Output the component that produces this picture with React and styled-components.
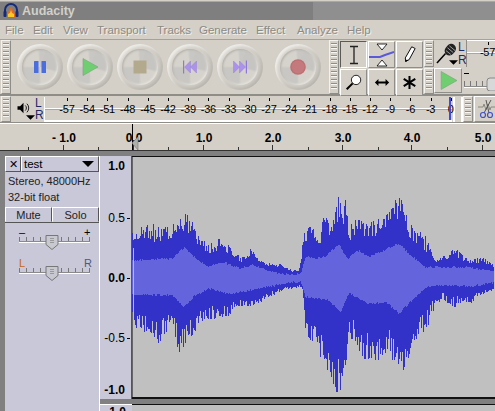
// Audacity main window
import React from 'react';
import styled, { createGlobalStyle } from 'styled-components';

const Global = createGlobalStyle`
  html, body { margin: 0; padding: 0; background: #d4d0c8; }
  * { box-sizing: border-box; }
`;

const FACE = '#d4d0c8';
const PANEL = '#c8c8d8';
const SANS = '"Liberation Sans", Arial, sans-serif';

const Window = styled.div`
  width: 495px;
  height: 411px;
  overflow: hidden;
  display: flex;
  flex-direction: column;
  background: ${FACE};
  font-family: ${SANS};
  font-size: 11px;
  color: #000;
`;

const TitleBar = styled.div`
  height: 19px;
  margin-top: 1px;
  flex-shrink: 0;
  display: flex;
  align-items: center;
  gap: 3px;
  padding-left: 3px;
  background: linear-gradient(90deg, #7f7f7f 0 313px, #8f8f8f 313px);
  border-top: 1px solid #a8a8a8;
`;

const AppName = styled.span`
  font-size: 12.5px;
  font-weight: bold;
  color: ${FACE};
`;

const MenuBar = styled.div`
  height: 20px;
  flex-shrink: 0;
  display: flex;
  align-items: center;
  padding-left: 5px;
  border-bottom: 1px solid #a5a29b;
`;

const MenuItem = styled.span`
  width: ${p => p.$w}px;
  font-size: 11.5px;
  color: #8c8a84;
  text-shadow: 1px 1px 0 #f2f0ea;
`;

const ToolRow = styled.div`
  height: 56px;
  flex-shrink: 0;
  display: flex;
  border-bottom: 2px solid #8f8d87;
`;

const Grip = styled.div`
  width: 10px;
  flex-shrink: 0;
  margin-left: ${p => p.$ml || 0}px;
  border: 1px solid #f4f2ec;
  border-right-color: #8f8d87;
  border-bottom-color: #8f8d87;
  background:
    repeating-linear-gradient(180deg, #8f8d87 0 1px, #f8f6f0 1px 2px, ${FACE} 2px 4px)
    center 2px / 6px calc(100% - 4px) no-repeat;
`;

const Transport = styled.div`
  display: flex;
  align-items: center;
  padding-left: 6px;
  width: 318px;
  gap: 4px;
`;

const RoundButton = styled.div`
  width: 46px;
  height: 46px;
  flex-shrink: 0;
  margin-left: ${p => p.$ml || 0}px;
  position: relative;
  border-radius: 50%;
  display: flex;
  align-items: center;
  justify-content: center;
  background: ${FACE};
  box-shadow:
    inset 2px 2px 3px #efeeea,
    inset -2px -2px 4px #b4b2ac;

  &::before {
    content: '';
    position: absolute;
    inset: 5px;
    border-radius: 50%;
    background: conic-gradient(
      #c8c7c3 0 20deg, #c6c5c1 20deg 100deg, #d6d3cc 110deg 175deg,
      #c8c7c3 185deg 265deg, #d6d3cc 275deg 350deg, #c8c7c3 360deg
    );
    box-shadow: inset 1px 1px 2px #b4b2ac, inset -1px -1px 2px #e6e5e0;
  }

  svg { position: relative; }
`;

const ToolGrid = styled.div`
  display: grid;
  grid-template-columns: repeat(3, 27px);
  grid-template-rows: 27px 27px;
  gap: 1px;
  padding: 1px;
`;

const ToolButton = styled.div`
  display: flex;
  align-items: center;
  justify-content: center;
  border: 1px solid;
  border-color: ${p => p.$down ? '#5c5a56 #fff #fff #5c5a56' : '#fff #8f8d87 #8f8d87 #fff'};
  background: ${FACE};
`;

const PlayThru = styled(ToolButton)`
  width: 28px;
  margin-bottom: 1px;
`;

const RightStack = styled.div`
  flex: 1;
  display: flex;
  flex-direction: column;
  gap: 1px;
`;

const RightRow = styled.div`
  flex: 1;
  display: flex;
`;

const MicBox = styled.div`
  width: 33px;
  flex-shrink: 0;
  display: flex;
  align-items: stretch;
  padding: 1px 0 1px 2px;
  border-right: 1px solid #8f8d87;
`;

const MicIcon = styled.div`
  position: relative;
  width: 22px;
  flex-shrink: 0;
  padding-top: 1px;
`;

const MicArrow = styled.div`
  position: absolute;
  right: 0;
  bottom: 1px;
  line-height: 0;
`;

const Channels = styled.div`
  display: flex;
  flex-direction: column;
  justify-content: space-between;
  font-size: 12px;
  line-height: 12px;
  color: #1c2a66;
`;

const MiniMeter = styled.div`
  flex: 1;
  position: relative;
  overflow: hidden;
  border-top: 1px solid #fff;
`;

const MiniLine = styled.div`
  position: absolute;
  left: 0;
  right: 0;
  top: 11px;
  height: 2px;
  background: linear-gradient(#fff 50%, #a9a7a1 50%);
`;

const MiniText = styled.span`
  position: absolute;
  right: 0;
  top: 5px;
  font-size: 11px;
  letter-spacing: -0.3px;
  color: #000;
`;

const MiniSlider = styled.div`
  flex: 1;
  min-width: 0;
  overflow: hidden;
  display: flex;
  align-items: center;
  padding-left: 1px;
`;

const MeterRow = styled.div`
  height: 27px;
  flex-shrink: 0;
  display: flex;
  border-bottom: 1px solid #8f8d87;
`;

const SpeakerBox = styled.div`
  width: 33px;
  flex-shrink: 0;
  display: flex;
  align-items: stretch;
  padding: 1px 0 1px 6px;
`;

const SpeakerIcon = styled.div`
  position: relative;
  width: 18px;
  flex-shrink: 0;
  padding-top: 5px;
`;

const SpeakerArrow = styled.div`
  position: absolute;
  right: 0;
  bottom: 1px;
  line-height: 0;
`;

const MeterScale = styled.div`
  width: 408px;
  flex-shrink: 0;
  position: relative;
  margin-top: 1px;
  border-left: 1px solid #fff;
  border-bottom: 2px solid #fff;
`;

const MeterLine = styled.div`
  position: absolute;
  left: 0;
  right: 0;
  top: 11px;
  height: 2px;
  background: linear-gradient(#fff 50%, #a9a7a1 50%);
`;

const MeterTick = styled.i`
  position: absolute;
  top: 1px;
  width: 1px;
  height: 3px;
  background: #000;
`;

const MeterLabel = styled.span`
  position: absolute;
  top: 6px;
  transform: translateX(-50%);
  font-size: 11px;
  line-height: 13px;
  letter-spacing: -0.2px;
`;

const MeterPeak = styled.div`
  position: absolute;
  top: 0;
  bottom: 0;
  left: 404px;
  width: 2px;
  background: #3f48e0;
`;

const MeterEnd = styled.div`
  width: 10px;
  flex-shrink: 0;
  margin: 1px 0 0 1px;
  border-left: 2px solid #fff;
  border-right: 2px solid #fff;
`;

const CutButton = styled.div`
  flex: 1;
  margin-left: 1px;
  display: flex;
  align-items: center;
  padding-left: 3px;
  border: 1px solid;
  border-color: #fff transparent #8f8d87 #fff;
`;

const Ruler = styled.div`
  height: 27px;
  flex-shrink: 0;
  position: relative;
  overflow: hidden;
  border-top: 1px solid #fff;
`;

const RulerLabel = styled.span`
  position: absolute;
  top: 7px;
  transform: translateX(-50%);
  font-size: 12px;
  font-weight: bold;
  white-space: pre;
`;

const RulerTick = styled.i`
  position: absolute;
  bottom: 0;
  width: 1px;
  height: ${p => p.$major ? 5 : 3}px;
  background: #333;
`;

const Playhead = styled.i`
  position: absolute;
  left: 132px;
  top: 0;
  bottom: 0;
  width: 1px;
  background: #000;
`;

const PlayMark = styled.svg`
  position: absolute;
  left: 132px;
  bottom: 0;
`;

const TrackArea = styled.div`
  flex: 1;
  min-height: 0;
  display: flex;
  background: #808080;
  border-top: 1px solid #333;
  padding: 5px 0 0 5px;
`;

const TrackPanel = styled.div`
  width: 95px;
  flex-shrink: 0;
  background: ${PANEL};
  display: flex;
  flex-direction: column;
  border-right: 1px solid #fff;
`;

const TitleRow = styled.div`
  display: flex;
  height: 16px;
`;

const CloseBox = styled.div`
  width: 16px;
  display: flex;
  align-items: center;
  justify-content: center;
  border: 1px solid;
  border-color: #fff #555 #555 #fff;
  font-size: 11px;
`;

const TrackName = styled.div`
  flex: 1;
  display: flex;
  align-items: center;
  justify-content: space-between;
  padding: 0 4px 0 2px;
  font-size: 11.5px;
  border: 1px solid;
  border-color: #fff #555 #555 #fff;
`;

const Arrow = styled.i`
  width: 0;
  height: 0;
  border-left: 6px solid transparent;
  border-right: 6px solid transparent;
  border-top: 6px solid #000;
`;

const Info = styled.div`
  height: 35px;
  padding: 1px 3px;
  font-size: 11px;
  line-height: 16px;
  color: #222;
  white-space: nowrap;
`;

const MuteRow = styled.div`
  display: flex;
  height: 16px;
  border-bottom: 1px solid #555;
`;

const PanelButton = styled.div`
  flex: 1;
  display: flex;
  align-items: center;
  justify-content: center;
  font-size: 11px;
  color: #222;
  border: 1px solid;
  border-color: #fff #555 transparent #fff;
`;

const SliderBlock = styled.div`
  padding: 3px 0 0 13px;
  display: flex;
  flex-direction: column;
  gap: 5px;
`;

const Scale = styled.div`
  height: 243px;
  flex-shrink: 0;
  position: relative;
  background: ${PANEL};
  border-right: 1px solid #555;
`;

const ScaleLabel = styled.span`
  position: absolute;
  right: 6px;
  transform: translateY(-50%);
  font-size: 12px;
  font-weight: ${p => p.$bold ? 'bold' : 'normal'};
  line-height: 14px;
  white-space: nowrap;
`;

const ScaleDash = styled.i`
  position: absolute;
  right: 1px;
  width: 3px;
  height: 1px;
  background: #000;
`;

const CanvasColumn = styled.div`
  flex: 1;
  min-width: 0;
  display: flex;
  flex-direction: column;
`;

const ScaleColumn = styled.div`
  width: 32px;
  flex-shrink: 0;
  display: flex;
  flex-direction: column;
`;

const Canvas = styled.div`
  height: 243px;
  flex-shrink: 0;
  background: #c0c0c0;
  border-top: 1px solid #111;
  border-bottom: 2px solid #111;
`;

const Gutter = styled.div`
  height: 5px;
  flex-shrink: 0;
`;

const NextCanvas = styled.div`
  flex: 1;
  background: #c0c0c0;
  border-top: 1px solid #111;
`;

const NextScale = styled.div`
  flex: 1;
  background: ${PANEL};
  border-top: 1px solid #fff;
  overflow: hidden;
  display: flex;
  justify-content: flex-end;
  padding-right: 6px;
  font-size: 12px;
  font-weight: bold;
  line-height: 14px;
`;

// waveform envelopes, read off the picture
const a = pts => pts.map(([x, y]) => [130 + x / 3, 150 + y / 3]);
const b = pts => pts.map(([x, y]) => [310 + x / 3, 150 + y / 3]);

const OUTER_TOP = [
  ...a([[8,255],[25,215],[60,215],[100,235],[140,215],[175,188],[195,220],[215,262],[245,280],[280,258],[310,300],[340,322],[370,290],[390,330],[410,340],[440,335],[470,352],[510,362],[525,250],[555,212]]),
  ...b([[0,250],[30,262],[45,195],[70,225],[90,130],[110,150],[122,245],[130,208],[180,215],[230,200],[245,175],[272,128],[290,190],[320,240],[340,245],[360,270],[380,325],[420,310],[435,292],[480,330],[520,320],[555,345]]),
];
const OUTER_BOT = [
  ...a([[8,525],[50,550],[95,583],[130,510],[148,610],[175,575],[200,545],[220,515],[260,505],[300,498],[320,468],[370,472],[410,448],[470,418],[520,412],[530,540],[558,612],[570,590]]),
  ...b([[0,585],[30,612],[60,672],[90,745],[108,715],[120,555],[160,625],[210,632],[240,600],[270,685],[300,628],[320,572],[360,530],[375,480],[400,445],[430,472],[490,458],[520,432],[555,425]]),
];
const INNER_TOP = [
  ...a([[8,332],[130,325],[165,293],[200,325],[240,350],[280,335],[330,355],[370,345],[430,365],[475,373],[515,372],[530,320],[570,325]]),
  ...b([[0,328],[50,320],[90,283],[115,328],[145,300],[180,320],[215,305],[270,280],[310,320],[350,352],[420,352],[480,352],[555,365]]),
];
const INNER_BOT = [
  ...a([[8,435],[130,435],[165,472],[200,435],[240,415],[300,432],[370,420],[470,400],[515,395],[530,442],[570,445]]),
  ...b([[0,437],[60,452],[95,486],[120,430],[180,462],[230,455],[270,490],[320,440],[355,410],[420,405],[480,410],[555,398]]),
];

const lerp = (pts, x) => {
  for (let i = 1; i < pts.length; i++) {
    if (x <= pts[i][0]) {
      const [x0, y0] = pts[i - 1];
      const [x1, y1] = pts[i];
      return y0 + ((y1 - y0) * (x - x0)) / (x1 - x0 || 1);
    }
  }
  return pts[pts.length - 1][1];
};

let seed = 7;
const rnd = () => {
  seed = (seed * 16807) % 2147483647;
  return seed / 2147483647;
};

const buildWave = () => {
  let dark = '';
  let light = '';
  for (let x = 133; x < 495; x++) {
    const px = x + 0.5;
    const oT = lerp(OUTER_TOP, px);
    const oB = lerp(OUTER_BOT, px);
    const iT = lerp(INNER_TOP, px);
    const iB = lerp(INNER_BOT, px);
    const top = oT + Math.pow(rnd(), 1.5) * (iT - oT) * 0.5;
    const bot = oB - Math.pow(rnd(), 1.5) * (oB - iB) * 0.5;
    dark += `M${x - 132.5} ${Math.round(top) - 157}V${Math.round(bot) - 157}`;
    const t2 = iT + (rnd() - 0.5) * 2;
    const b2 = iB + (rnd() - 0.5) * 2;
    light += `M${x - 132.5} ${Math.round(t2) - 157}V${Math.round(b2) - 157}`;
  }
  return { dark, light };
};

const wave = buildWave();

const Waveform = () => (
  <svg width="362" height="240" viewBox="0 0 362 240" style={{ display: 'block' }} shapeRendering="crispEdges">
    <path d="M0 0V240" stroke="#666" strokeWidth="1" transform="translate(0.5 0)" />
    <path d={wave.dark} stroke="#3232c8" strokeWidth="1" fill="none" />
    <path d={wave.light} stroke="#6464dc" strokeWidth="1" fill="none" />
    <path d="M1.5 91V168" stroke="#d8d020" strokeWidth="1" />
  </svg>
);

const AppIcon = () => (
  <svg width="16" height="16" viewBox="0 0 16 16">
    <path d="M2 10V7a6 6 0 0 1 12 0v3" fill="none" stroke="#152a78" strokeWidth="2" />
    <rect x="0.5" y="8" width="3" height="6" rx="1" fill="#152a78" />
    <rect x="12.5" y="8" width="3" height="6" rx="1" fill="#152a78" />
    <path d="M4 14V10l1.5-1L7 5.5 8 4l1 1.5L10.500 9 12 10v4z" fill="#e8681c" />
    <path d="M5 14v-3l2-1 1-3 1 3 2 1v3z" fill="#f6c828" />
  </svg>
);

const Pause = () => (
  <svg width="14" height="14" viewBox="0 0 14 14">
    <rect x="1" y="1" width="4.500" height="12" rx="0.500" fill="#4a6ee0" />
    <rect x="8.500" y="1" width="4.500" height="12" rx="0.500" fill="#4a6ee0" />
  </svg>
);

const Play = ({ size = 18 }) => (
  <svg width={size} height={size} viewBox="0 0 18 18">
    <path d="M2 0.500L17 9 2 17.500z" fill="#6fcf70" stroke="#7f9f7f" strokeWidth="0.600" />
  </svg>
);

const Stop = () => (
  <svg width="14" height="14" viewBox="0 0 14 14">
    <rect x="0.500" y="0.500" width="13" height="13" fill="#b3a98c" />
  </svg>
);

const Rewind = () => (
  <svg width="14" height="14" viewBox="0 0 14 14">
    <rect x="0" y="0.500" width="1.200" height="13" fill="#8f78d8" />
    <path d="M7.500 1L1.500 7l6 6zM13.500 1l-6 6 6 6z" fill="#ab92ea" stroke="#8f78d8" strokeWidth="0.400" />
  </svg>
);

const Forward = () => (
  <svg width="14" height="14" viewBox="0 0 14 14">
    <rect x="12.800" y="0.500" width="1.200" height="13" fill="#8f78d8" />
    <path d="M6.500 1l6 6-6 6zM0.500 1l6 6-6 6z" fill="#ab92ea" stroke="#8f78d8" strokeWidth="0.400" />
  </svg>
);

const Record = () => (
  <svg width="16" height="16" viewBox="0 0 16 16">
    <circle cx="8" cy="8" r="7.800" fill="#bd6f72" />
    <circle cx="8" cy="8" r="6.500" fill="#c47a7c" />
  </svg>
);

const IBeam = () => (
  <svg width="14" height="20" viewBox="0 0 14 20">
    <path d="M3 1.500h8M3 18.500h8M7 1.500v17" stroke="#222" strokeWidth="1.300" fill="none" />
  </svg>
);

const Envelope = () => (
  <svg width="25" height="24" viewBox="0 0 25 24">
    <path d="M8 1h10l-5 6z" fill="#fff" stroke="#000" strokeWidth="0.800" />
    <path d="M8 23h10l-5-6z" fill="#fff" stroke="#000" strokeWidth="0.800" />
    <path d="M0 14h11l5-2 9-3" fill="none" stroke="#5a5ad8" strokeWidth="2" />
  </svg>
);

const Pencil = () => (
  <svg width="12" height="19" viewBox="0 0 14 20">
    <path d="M9 1l4 2-7 13-4 2-0.500-4z" fill="#fff" stroke="#000" strokeWidth="1.100" />
    <path d="M1.500 18l2.500-1.500" stroke="#000" strokeWidth="1.500" />
  </svg>
);

const Magnifier = () => (
  <svg width="17" height="17" viewBox="0 0 20 20">
    <circle cx="13" cy="7" r="5.500" fill="#fff" stroke="#000" strokeWidth="1" />
    <path d="M9 11l-7 7" stroke="#000" strokeWidth="2.400" />
  </svg>
);

const TimeShift = () => (
  <svg width="16" height="9" viewBox="0 0 18 10">
    <path d="M1 5l4-4v3h8V1l4 4-4 4V6H5v3z" fill="#000" />
  </svg>
);

const Multi = () => (
  <svg width="13" height="13" viewBox="0 0 16 18">
    <path d="M8 0v18M0 4l16 10M16 4L0 14" stroke="#000" strokeWidth="2.800" />
  </svg>
);

const Mic = () => (
  <svg width="21" height="22" viewBox="0 0 22 23">
    <path d="M1 22l9-10" stroke="#000" strokeWidth="1.600" />
    <rect x="10" y="1.500" width="10" height="13" rx="5" fill="#222" transform="rotate(40 15 8)" />
    <path d="M12 6l6 5M14 4l6 5M10.500 9l5 4" stroke="#ddd" strokeWidth="0.700" />
  </svg>
);

const SmallArrow = () => (
  <svg width="9" height="5" viewBox="0 0 10 5">
    <path d="M0 0h10L5 5z" fill="#000" />
  </svg>
);

const Speaker = () => (
  <svg width="13" height="12" viewBox="0 0 14 14">
    <path d="M0 5h3l4-4v12l-4-4H0z" fill="#000" />
    <path d="M9 4a4 4 0 0 1 0 6M11 2a7 7 0 0 1 0 10" fill="none" stroke="#000" strokeWidth="1" />
  </svg>
);

const Scissors = () => (
  <svg width="20" height="20" viewBox="0 0 20 20">
    <path d="M0 8h5l1-3 2 6 2-6 2 6 1-3h7" fill="none" stroke="#8a8880" strokeWidth="1" />
    <path d="M13 1L6 14M8 1l3 13" stroke="#555" strokeWidth="1" />
    <circle cx="5" cy="16" r="2.500" fill="none" stroke="#3f52c8" strokeWidth="1.200" />
    <circle cx="12" cy="16" r="2.500" fill="none" stroke="#3f52c8" strokeWidth="1.200" />
  </svg>
);

const Slider = ({ left, right, thumb = 34 }) => (
  <svg width="74" height="26" viewBox="0 0 74 26" style={{ display: 'block' }}>
    <text x="1" y="10" fontSize="11" fontFamily={SANS} fill={left === 'L' ? '#c06a10' : '#000'}>{left}</text>
    <text x="66" y="10" fontSize="11" fontFamily={SANS} fill={right === 'R' ? '#4a5a80' : '#000'}>{right}</text>
    <path d="M1 15.500h71" stroke="#8a8a8a" strokeWidth="1" />
    <path d="M1 16.500h71" stroke="#fff" strokeWidth="1" />
    {[1, 8, 15, 22, 29, 43, 50, 57, 64, 71].map(x => (
      <path key={x} d={`M${x + 0.5} 11v4`} stroke="#777" strokeWidth="1" />
    ))}
    <path d={`M${thumb - 6} 9.500h12v9l-6 5-6-5z`} fill="#c8c8d0" stroke="#777" />
    <path d={`M${thumb - 2} 12.500h4M${thumb - 2} 14.500h4M${thumb - 2} 16.500h4`} stroke="#999" />
  </svg>
);

const InputSlider = () => (
  <svg width="32" height="20" viewBox="0 0 32 20" style={{ flexShrink: 0 }}>
    <path d="M1 2.500h5" stroke="#000" />
    <path d="M1 15.500h26" stroke="#8a8a8a" />
    <path d="M1 16.500h26" stroke="#fff" />
    {[1, 7, 13, 19].map(x => <path key={x} d={`M${x + 0.5} 10v5`} stroke="#777" />)}
    <rect x="24" y="7" width="12" height="13" rx="3" fill="#d8d8d8" stroke="#888" />
  </svg>
);

const MENU = [['File', 28], ['Edit', 30], ['View', 34], ['Transport', 60], ['Tracks', 42], ['Generate', 57], ['Effect', 41], ['Analyze', 50], ['Help', 40]];
const METER = [-57, -54, -51, -48, -45, -42, -39, -36, -33, -30, -27, -24, -21, -18, -15, -12, -9, -6, -3, 0];
const RULER = [['- 1.0', 64], ['0.0', 134], ['1.0', 204], ['2.0', 273], ['3.0', 343], ['4.0', 412], ['5.0', 483]];
const MINOR = [28, 98, 168, 238, 308, 378, 447];
const SCALE = [['1.0', 10, true], ['0.5', 62, false], ['0.0', 122, true], ['-0.5', 182, false], ['-1.0', 234, true]];

export default function App() {
  return (
    <Window>
      <Global />
      <TitleBar>
        <AppIcon />
        <AppName>Audacity</AppName>
      </TitleBar>
      <MenuBar>
        {MENU.map(([name, w]) => <MenuItem key={name} $w={w}>{name}</MenuItem>)}
      </MenuBar>

      <ToolRow>
        <Grip $ml={1} />
        <Transport>
          <RoundButton><Pause /></RoundButton>
          <RoundButton><Play /></RoundButton>
          <RoundButton><Stop /></RoundButton>
          <RoundButton><Rewind /></RoundButton>
          <RoundButton><Forward /></RoundButton>
          <RoundButton $ml={8}><Record /></RoundButton>
        </Transport>
        <Grip />
        <ToolGrid>
          <ToolButton $down><IBeam /></ToolButton>
          <ToolButton><Envelope /></ToolButton>
          <ToolButton><Pencil /></ToolButton>
          <ToolButton><Magnifier /></ToolButton>
          <ToolButton><TimeShift /></ToolButton>
          <ToolButton><Multi /></ToolButton>
        </ToolGrid>
        <RightStack>
          <RightRow>
            <Grip />
            <MicBox>
              <MicIcon>
                <Mic />
                <MicArrow><SmallArrow /></MicArrow>
              </MicIcon>
              <Channels>
                <span>L</span>
                <span>R</span>
              </Channels>
            </MicBox>
            <MiniMeter>
              <MeterTick style={{ left: 21 }} />
              <MiniLine />
              <MiniText>-57</MiniText>
            </MiniMeter>
          </RightRow>
          <RightRow>
            <Grip />
            <PlayThru><Play size={19} /></PlayThru>
            <MiniSlider><InputSlider /></MiniSlider>
          </RightRow>
        </RightStack>
      </ToolRow>

      <MeterRow>
        <Grip $ml={1} />
        <SpeakerBox>
          <SpeakerIcon>
            <Speaker />
            <SpeakerArrow><SmallArrow /></SpeakerArrow>
          </SpeakerIcon>
          <Channels>
            <span>L</span>
            <span>R</span>
          </Channels>
        </SpeakerBox>
        <MeterScale>
          <MeterLine />
          {METER.map((v, i) => {
            const x = 22 + i * 20.2;
            return (
              <React.Fragment key={v}>
                <MeterTick style={{ left: x }} />
                <MeterLabel style={{ left: x }}>{v}</MeterLabel>
              </React.Fragment>
            );
          })}
          <MeterPeak />
        </MeterScale>
        <MeterEnd />
        <Grip />
        <CutButton><Scissors /></CutButton>
      </MeterRow>

      <Ruler>
        {RULER.map(([t, x]) => <RulerLabel key={t} style={{ left: x }}>{t}</RulerLabel>)}
        {RULER.map(([t, x]) => <RulerTick key={t} $major style={{ left: x - 1 }} />)}
        {MINOR.map(x => <RulerTick key={x} style={{ left: x }} />)}
        <Playhead />
        <PlayMark width="8" height="13" viewBox="0 0 8 13">
          <path d="M6 0v13L0 6z" fill="#b0aea8" stroke="#777" strokeWidth="0.600" />
        </PlayMark>
      </Ruler>

      <TrackArea>
        <TrackPanel>
          <TitleRow>
            <CloseBox>✕</CloseBox>
            <TrackName>test<Arrow /></TrackName>
          </TitleRow>
          <Info>Stereo, 48000Hz<br />32-bit float</Info>
          <MuteRow>
            <PanelButton>Mute</PanelButton>
            <PanelButton>Solo</PanelButton>
          </MuteRow>
          <SliderBlock>
            <Slider left="–" right="+" />
            <Slider left="L" right="R" />
          </SliderBlock>
        </TrackPanel>
        <ScaleColumn>
          <Scale>
            {SCALE.map(([t, y, bold]) => <ScaleLabel key={t} $bold={bold} style={{ top: y }}>{t}</ScaleLabel>)}
            {[62, 122, 182].map(y => <ScaleDash key={y} style={{ top: y }} />)}
          </Scale>
          <Gutter />
          <NextScale>1.0</NextScale>
        </ScaleColumn>
        <CanvasColumn>
          <Canvas><Waveform /></Canvas>
          <Gutter />
          <NextCanvas />
        </CanvasColumn>
      </TrackArea>
    </Window>
  );
}
